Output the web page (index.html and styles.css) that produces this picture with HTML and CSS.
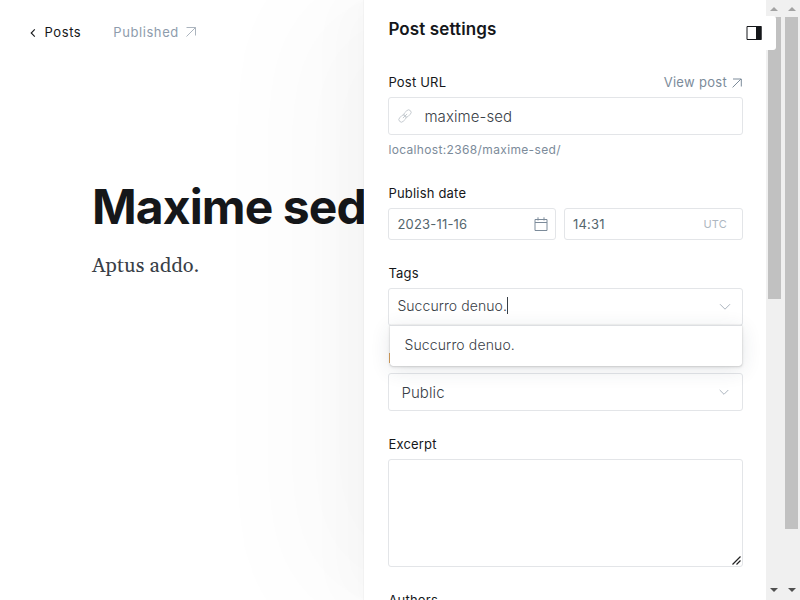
FILE: index.html
```html
<!DOCTYPE html>
<html lang="en">
<head>
<meta charset="utf-8">
<title>Maxime sed</title>
<link rel="stylesheet" href="styles.css">
</head>
<body>
<div class="app">
  <main class="editor">
    <header class="editor-header">
      <a class="back"><svg width="6" height="10" viewBox="0 0 6 10"><path d="M4.8 1.3 1.2 5l3.6 3.7"/></svg><span>Posts</span></a>
      <a class="status"><span>Published</span><svg width="12" height="12" viewBox="0 0 12 12"><path d="M1.5 1.5h9v8M10.5 1.5l-9 9"/></svg></a>
    </header>
    <article class="post">
      <h1>Maxime sed</h1>
      <p>Aptus addo.</p>
    </article>
  </main>
  <aside class="settings">
    <div class="settings-body">
      <h2>Post settings</h2>
      <section class="group url-group">
        <div class="label-row"><label>Post URL</label><a class="view"><span>View post</span><svg width="10" height="10" viewBox="0 0 10 10"><path d="M1 1h8.3v7.5M9 1 .6 9.4"/></svg></a></div>
        <div class="field url"><svg width="14" height="14" viewBox="0 0 14 14"><g transform="rotate(-45 7 7)"><rect x="-.6" y="4.5" width="8.2" height="5" rx="2.5"/><rect x="6.4" y="4.5" width="8.2" height="5" rx="2.5"/><path d="M4 7h6"/></g></svg><span>maxime-sed</span></div>
        <p class="hint">localhost:2368/maxime-sed/</p>
      </section>
      <section class="group date-group">
        <label>Publish date</label>
        <div class="date-row">
          <div class="field date"><span>2023-11-16</span><svg width="14" height="14" viewBox="0 0 14 14"><path d="M1 2.5h12v11H1zM1 5.5h12M4 .3v3.2M10 .3v3.2"/></svg></div>
          <div class="field time"><span>14:31</span><small>UTC</small></div>
        </div>
      </section>
      <section class="group tag-group">
        <label>Tags</label>
        <div class="field tags"><span class="query">Succurro denuo.</span><svg width="12" height="8" viewBox="0 0 12 8"><path d="m1 1.2 5 5 5-5"/></svg>
          <div class="dropdown">Succurro denuo.</div>
        </div>
      </section>
      <section class="group access-group">
        <label>Post access</label>
        <div class="field access"><span>Public</span><svg width="10" height="7" viewBox="0 0 10 7"><path d="m.7 1 4.3 4.3L9.3 1"/></svg></div>
      </section>
      <section class="group excerpt-group">
        <label>Excerpt</label>
        <div class="field excerpt"><svg width="9" height="9" viewBox="0 0 9 9"><path d="M.5 8.5l8-8M4.5 8.5l4-4"/></svg></div>
      </section>
      <section class="group"><label>Authors</label></section>
    </div>
    <div class="bar inner"><i class="up"></i><b></b><i class="down"></i></div>
    <div class="bar outer"><i class="up"></i><b></b><i class="down"></i></div>
    <button class="toggle" aria-label="Settings"><svg width="16" height="14" viewBox="0 0 16 14"><path d="M1 .5h14v13H1z" fill="none" stroke="#15171a"/><path d="M10 0h5.5v14H10z" fill="#15171a"/></svg></button>
  </aside>
</div>
</body>
</html>
```
FILE: styles.css
```css
* { box-sizing: border-box; }
body { margin: 0; background: #fff; color: #15171a; font: 13px/20px Inter, sans-serif; letter-spacing: .2px; }
h1, h2, p { margin: 0; }
svg { display: block; flex: none; fill: none; stroke: currentColor; }
.app { display: flex; width: 800px; height: 600px; overflow: hidden; }
.editor { flex: none; width: 364px; }
.editor-header { display: flex; gap: 32px; padding: 22px 0 0 29.5px; height: 56px; }
.back, .status { display: flex; align-items: center; height: 20px; letter-spacing: .58px; }
.back { gap: 9px; color: #394047; }
.back svg { position: relative; top: 1px; stroke: #15171a; stroke-width: 1.1; }
.back span { color: #15171a; }
.status { gap: 6px; color: #8e9cac; }
.status svg { color: #abb4be; }
.post { padding: 124px 0 0 92px; white-space: nowrap; }
.post h1 { font-size: 48px; line-height: 54px; font-weight: 700; letter-spacing: -.92px; }
.post p { margin-top: 16px; font: 20px/32px Georgia, Gelasio, serif; color: #394047; letter-spacing: .12px; }
.settings { position: relative; flex: none; display: flex; width: 436px; height: 600px; background: #fff; box-shadow: 0 0 1px rgba(0,0,0,.15), -3px 0 14px rgba(0,0,0,.012), -22px 0 45px rgba(0,0,0,.02), -60px 0 120px rgba(0,0,0,.028); }
.settings-body { flex: none; width: 402px; padding: 18px 23px 0 24.4px; overflow: hidden; }
.settings h2 { font-size: 17px; line-height: 22px; font-weight: 600; letter-spacing: .12px; }
.group label { display: block; height: 20px; font-weight: 400; }
.field { display: flex; align-items: center; width: 354.6px; border: 1px solid #e3e5e8; border-radius: 3px; background: #fff; }
.url-group { margin-top: 32px; height: 111px; }
.label-row { display: flex; justify-content: space-between; width: 353.6px; }
.view { display: flex; align-items: center; gap: 5px; color: #7c8b9a; letter-spacing: .3px; height: 19px; }
.view svg { position: relative; top: 1px; }
.url { height: 38px; margin-top: 5px; padding-left: 9px; gap: 12px; font-size: 15px; font-weight: 300; letter-spacing: .1px; line-height: 22px; color: #394047; }
.url span, .access span { position: relative; top: 1px; }
.url svg { stroke: #c2c8ce; stroke-width: .9; }
.hint { margin-top: 5px; font-size: 12px; color: #7c8b9a; letter-spacing: .35px; }
.date-group { height: 80px; }
.date-row { display: flex; gap: 8px; margin-top: 5px; }
.date, .time { height: 32px; padding: 0 8px; font-size: 13px; justify-content: space-between; color: #54666d; }
.date { width: 167.6px; padding-right: 7px; }
.date svg { stroke: #7c8b9a; }
.time { width: 179px; padding-right: 15px; }
.time small { font-size: 11px; color: #aeb7c1; }
.tag-group { height: 85px; }
.tags { position: relative; height: 38px; margin-top: 5px; padding: 0 11px 0 8px; justify-content: space-between; font-size: 14px; font-weight: 300; letter-spacing: .07px; color: #394047; }
.tags > svg, .access svg { stroke: #abb4be; }
.query { margin-bottom: 3px; border-right: 1px solid #394047; line-height: 17px; }
.dropdown { position: absolute; z-index: 2; left: 1px; top: 35.5px; width: 352px; height: 41px; padding: 0 14px; border-top: 1px solid #dddfe2; border-radius: 0 0 3px 3px; background: #fff; line-height: 38px; letter-spacing: .14px; color: #394047; box-shadow: 0 0 1px rgba(0,0,0,.3), 0 1px 3px rgba(0,0,0,.15), 0 4px 20px rgba(40,60,70,.12); }
.access-group { height: 86px; }
.access { height: 38px; margin-top: 5px; padding: 0 13px 0 12px; justify-content: space-between; font-size: 15px; font-weight: 300; letter-spacing: .1px; color: #394047; }
.excerpt-group { height: 156px; }
.excerpt { height: 108px; margin-top: 5px; padding: 0 1px 1px 0; align-items: flex-end; justify-content: flex-end; }
.excerpt svg { stroke: #222; stroke-width: 1.2; }
.bar { display: flex; flex-direction: column; align-items: center; height: 600px; background: #f0f0f0; }
.inner { width: 17px; padding-right: 1px; }
.outer { width: 17px; }
.bar b { flex: none; width: 13px; background: #c1c1c1; }
.inner b { height: 282px; margin: 6px 0 289px; }
.outer b { height: 512px; margin: 6px 0 59px; }
.bar i { flex: none; border: 4px solid transparent; }
.bar .up { height: 4px; margin-top: 7px; border-width: 0 4px 4px; border-bottom-color: #a3a3a3; }
.bar .down { height: 4px; border-width: 4px 4px 0; border-top-color: #505050; }
.toggle { position: absolute; left: 370px; top: 16px; width: 42px; height: 34px; padding: 0 0 0 12px; border: 0; border-radius: 3px; background: #fff; }
.toggle svg { stroke: none; }
```
